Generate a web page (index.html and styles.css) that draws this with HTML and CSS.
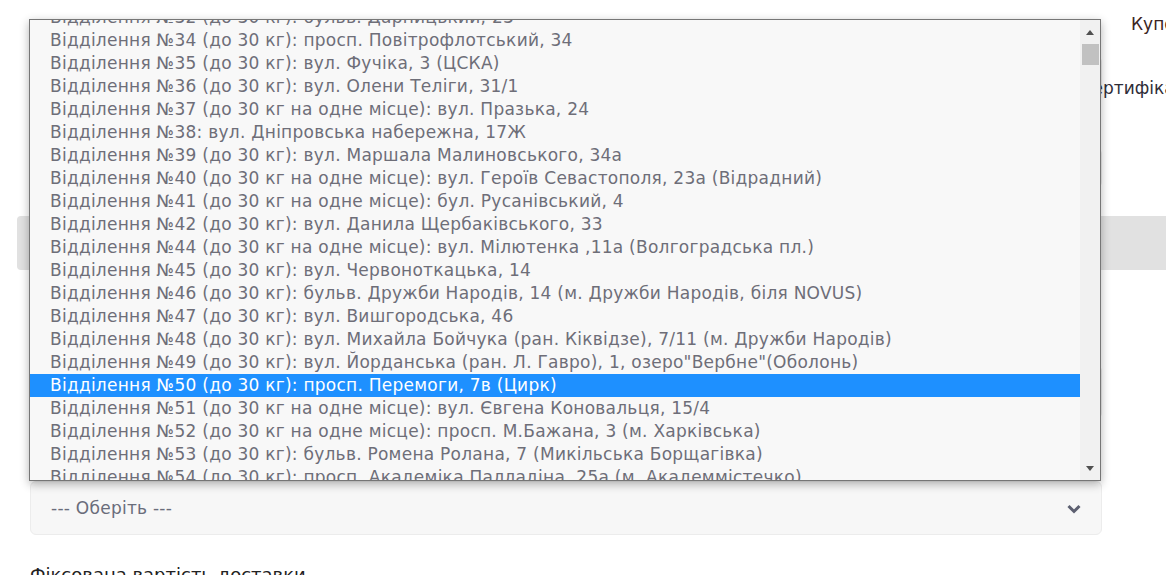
FILE: index.html
```html
<!DOCTYPE html>
<html lang="uk">
<head>
    <meta charset="UTF-8">
    <meta name="viewport" content="width=device-width, initial-scale=1.0">
    <title>Оформлення замовлення</title>
    <link rel="stylesheet" href="styles.css">
</head>
<body>
<div class="checkout">
    <!-- Top: contact fields + coupon -->
    <div class="top">
        <div class="main-col">
            <div class="field">
                <label class="field-label">Ім'я та прізвище</label>
                <div class="input"></div>
            </div>
            <div class="field">
                <label class="field-label">Телефон</label>
                <div class="input"></div>
            </div>
        </div>
        <aside class="side-col">
            <h4 class="coupon-title">Купон</h4>
            <p class="cert-text">Є сертифікат?</p>
        </aside>
    </div>

    <div class="section-bar">Доставка</div>

    <!-- Delivery -->
    <div class="delivery">
        <div class="field">
            <label class="field-label">Місто</label>
            <div class="select">Київ</div>
        </div>
        <div class="field">
            <label class="field-label">Відділення Нової пошти</label>
            <div class="select-wrap">
                <div class="select">
                    <span>--- Оберіть ---</span>
                    <svg class="chevron" width="14" height="10" viewBox="0 0 14 10">
                        <path d="M1.5 2 L7 7.5 L12.5 2" fill="none" stroke="currentColor" stroke-width="3"/>
                    </svg>
                </div>

                <!-- opened select popup -->
                <div class="dropdown">
                    <div class="options-view">
                        <ul class="options">
                            <li>Відділення №32 (до 30 кг): бульв. Дарницький, 23</li>
                            <li>Відділення №34 (до 30 кг): просп. Повітрофлотський, 34</li>
                            <li>Відділення №35 (до 30 кг): вул. Фучіка, 3 (ЦСКА)</li>
                            <li>Відділення №36 (до 30 кг): вул. Олени Теліги, 31/1</li>
                            <li>Відділення №37 (до 30 кг на одне місце): вул. Празька, 24</li>
                            <li>Відділення №38: вул. Дніпровська набережна, 17Ж</li>
                            <li>Відділення №39 (до 30 кг): вул. Маршала Малиновського, 34а</li>
                            <li>Відділення №40 (до 30 кг на одне місце): вул. Героїв Севастополя, 23а (Відрадний)</li>
                            <li>Відділення №41 (до 30 кг на одне місце): бул. Русанівський, 4</li>
                            <li>Відділення №42 (до 30 кг): вул. Данила Щербаківського, 33</li>
                            <li>Відділення №44 (до 30 кг на одне місце): вул. Мілютенка ,11а (Волгоградська пл.)</li>
                            <li>Відділення №45 (до 30 кг): вул. Червоноткацька, 14</li>
                            <li>Відділення №46 (до 30 кг): бульв. Дружби Народів, 14 (м. Дружби Народів, біля NOVUS)</li>
                            <li>Відділення №47 (до 30 кг): вул. Вишгородська, 46</li>
                            <li>Відділення №48 (до 30 кг): вул. Михайла Бойчука (ран. Кіквідзе), 7/11 (м. Дружби Народів)</li>
                            <li>Відділення №49 (до 30 кг): вул. Йорданська (ран. Л. Гавро), 1, озеро"Вербне"(Оболонь)</li>
                            <li class="selected">Відділення №50 (до 30 кг): просп. Перемоги, 7в (Цирк)</li>
                            <li>Відділення №51 (до 30 кг на одне місце): вул. Євгена Коновальця, 15/4</li>
                            <li>Відділення №52 (до 30 кг на одне місце): просп. М.Бажана, 3 (м. Харківська)</li>
                            <li>Відділення №53 (до 30 кг): бульв. Ромена Ролана, 7 (Микільська Борщагівка)</li>
                            <li>Відділення №54 (до 30 кг): просп. Академіка Палладіна, 25а (м. Академмістечко)</li>
                        </ul>
                    </div>
                    <div class="scrollbar">
                        <span class="arrow-up"></span>
                        <span class="thumb"></span>
                        <span class="arrow-down"></span>
                    </div>
                </div>
            </div>
        </div>

        <p class="delivery-note">Фіксована вартість доставки</p>
    </div>
</div>
</body>
</html>
```

FILE: styles.css
```css
/* General reset */
* {
    margin: 0;
    padding: 0;
    box-sizing: border-box;
}

html, body {
    overflow: hidden;
}

body {
    font-family: 'DejaVu Sans', sans-serif;
    font-size: 17px;
    color: #333;
    background: #fff;
    width: 1166px;
    height: 575px;
}

.checkout {
    width: 1400px;
}

/* Top block */
.top {
    display: grid;
    grid-template-columns: 1072px 1fr;
    padding-left: 30px;
    min-height: 216px;
}

.main-col {
    padding-top: 24px;
}

.field {
    margin-bottom: 30px;
}

.main-col .field {
    margin-bottom: 20px;
}

.field-label {
    display: block;
    line-height: 24px;
    margin-bottom: 8px;
    font-size: 16px;
}

.input {
    height: 40px;
    border: 1px solid #ececec;
    border-radius: 6px;
    background: #f7f7f7;
}

.side-col {
    padding-top: 12px;
}

.coupon-title {
    font-weight: normal;
    font-size: 17px;
    line-height: 24px;
    padding-left: 29px;
    color: #3b2523;
}

.cert-text {
    margin-top: 40px;
    margin-left: -36px;
    line-height: 24px;
    font-size: 17px;
    color: #2e2d38;
}

/* Grey section bar */
.section-bar {
    margin-left: 17px;
    height: 54px;
    background: #e1e1e1;
    border-radius: 4px 0 0 4px;
    color: #e1e1e1;
    line-height: 54px;
    padding-left: 13px;
}

/* Delivery block */
.delivery {
    width: 1102px;
    padding: 63px 0 0 30px;
}

.select-wrap {
    position: relative;
}

.select {
    height: 54px;
    display: flex;
    align-items: center;
    justify-content: space-between;
    padding: 0 20px;
    background: #f7f7f7;
    border: 1px solid #ececec;
    border-radius: 6px;
    color: #6a6d7b;
    font-size: 17px;
    letter-spacing: 0.25px;
}

.chevron {
    color: #5d6071;
    margin-top: 2px;
}

.delivery .field:last-of-type {
    margin-bottom: 0;
}

.delivery-note {
    margin-top: 28px;
    font-size: 18px;
    line-height: 24px;
    color: #222;
}

/* Opened select popup */
.dropdown {
    position: absolute;
    left: -1px;
    bottom: 100%;
    width: 1072px;
    height: 462px;
    display: flex;
    background: #f8f8f8;
    border: 1px solid #767676;
    box-shadow: 0 3px 9px rgba(0, 0, 0, 0.3);
    z-index: 10;
}

.options-view {
    flex: 1;
    overflow: hidden;
}

.options {
    list-style: none;
    margin-top: -14px;
}

.options li {
    height: 23px;
    line-height: 23px;
    padding-left: 20px;
    white-space: nowrap;
    color: #6e6e78;
    font-size: 17px;
    letter-spacing: 0.25px;
}

.options li.selected {
    background: #1e90ff;
    color: #fff;
}

.scrollbar {
    width: 20px;
    background: #f1f1f1;
    display: flex;
    flex-direction: column;
    align-items: center;
}

.arrow-up,
.arrow-down {
    width: 0;
    height: 0;
    border-left: 4.5px solid transparent;
    border-right: 4.5px solid transparent;
}

.arrow-up {
    margin-top: 10px;
    border-bottom: 5px solid #505050;
}

.arrow-down {
    margin-top: auto;
    margin-bottom: 9px;
    border-top: 5px solid #505050;
}

.thumb {
    width: 17px;
    height: 21px;
    margin-top: 9px;
    margin-left: 1px;
    background: #c1c1c1;
}
```
